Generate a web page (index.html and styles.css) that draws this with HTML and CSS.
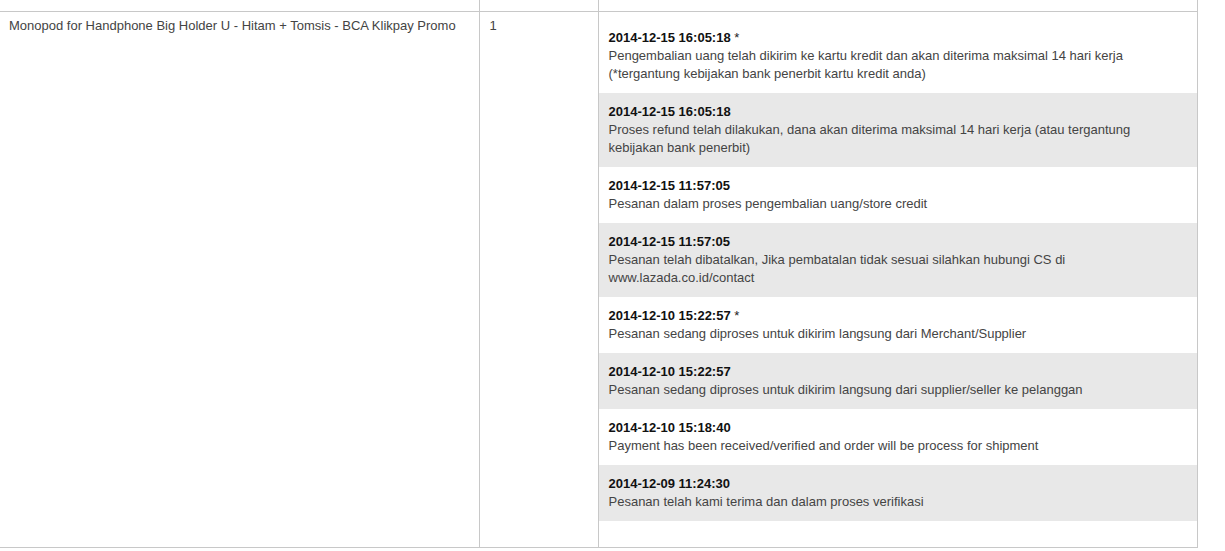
FILE: index.html
```html
<!DOCTYPE html>
<html lang="id">
<head>
  <meta charset="UTF-8" />
  <meta name="viewport" content="width=device-width, initial-scale=1" />
  <title>Status Pesanan</title>
  <link rel="stylesheet" href="styles.css">
</head>
<body>
  <table class="pesanan-table">
    <colgroup>
      <col class="col-produk">
      <col class="col-jumlah">
      <col class="col-riwayat">
    </colgroup>
    <tr class="baris-atas">
      <td></td>
      <td></td>
      <td></td>
    </tr>
    <tr>
      <td class="produk">Monopod for Handphone Big Holder U - Hitam + Tomsis - BCA Klikpay Promo</td>
      <td class="jumlah">1</td>
      <td class="riwayat">
        <ul class="status-list">
          <li>
            <strong>2014-12-15 16:05:18</strong> *
            <p>Pengembalian uang telah dikirim ke kartu kredit dan akan diterima maksimal 14 hari kerja (*tergantung kebijakan bank penerbit kartu kredit anda)</p>
          </li>
          <li>
            <strong>2014-12-15 16:05:18</strong>
            <p>Proses refund telah dilakukan, dana akan diterima maksimal 14 hari kerja (atau tergantung kebijakan bank penerbit)</p>
          </li>
          <li>
            <strong>2014-12-15 11:57:05</strong>
            <p>Pesanan dalam proses pengembalian uang/store credit</p>
          </li>
          <li>
            <strong>2014-12-15 11:57:05</strong>
            <p>Pesanan telah dibatalkan, Jika pembatalan tidak sesuai silahkan hubungi CS di www.lazada.co.id/contact</p>
          </li>
          <li>
            <strong>2014-12-10 15:22:57</strong> *
            <p>Pesanan sedang diproses untuk dikirim langsung dari Merchant/Supplier</p>
          </li>
          <li>
            <strong>2014-12-10 15:22:57</strong>
            <p>Pesanan sedang diproses untuk dikirim langsung dari supplier/seller ke pelanggan</p>
          </li>
          <li>
            <strong>2014-12-10 15:18:40</strong>
            <p>Payment has been received/verified and order will be process for shipment</p>
          </li>
          <li>
            <strong>2014-12-09 11:24:30</strong>
            <p>Pesanan telah kami terima dan dalam proses verifikasi</p>
          </li>
        </ul>
      </td>
    </tr>
  </table>
</body>
</html>
```

FILE: styles.css
```css
body {
  font-family: "Liberation Sans", Arial, sans-serif;
  font-size: 13px;
  color: #444;
  background: #fff;
  margin: 0;
}
.pesanan-table {
  width: 1198px;
  border-collapse: collapse;
  table-layout: fixed;
}
.col-produk {
  width: 479px;
}
.col-jumlah {
  width: 119px;
}
.pesanan-table td {
  border-right: 1px solid #c8c8c8;
  border-bottom: 1px solid #c8c8c8;
  vertical-align: top;
  line-height: 18px;
  padding: 5px 9px;
}
.pesanan-table td.jumlah {
  padding-left: 10px;
}
.baris-atas td {
  height: 11px;
  padding: 0;
}
.pesanan-table td.riwayat {
  padding: 7px 0 26px;
}
.status-list {
  list-style: none;
  margin: 0;
  padding: 0;
}
.status-list li {
  padding: 10px 10px;
  color: #222;
}
.status-list li:nth-child(even) {
  background: #e8e8e8;
}
.status-list strong {
  color: #111;
}
.status-list p {
  margin: 0;
  color: #444;
}
```
